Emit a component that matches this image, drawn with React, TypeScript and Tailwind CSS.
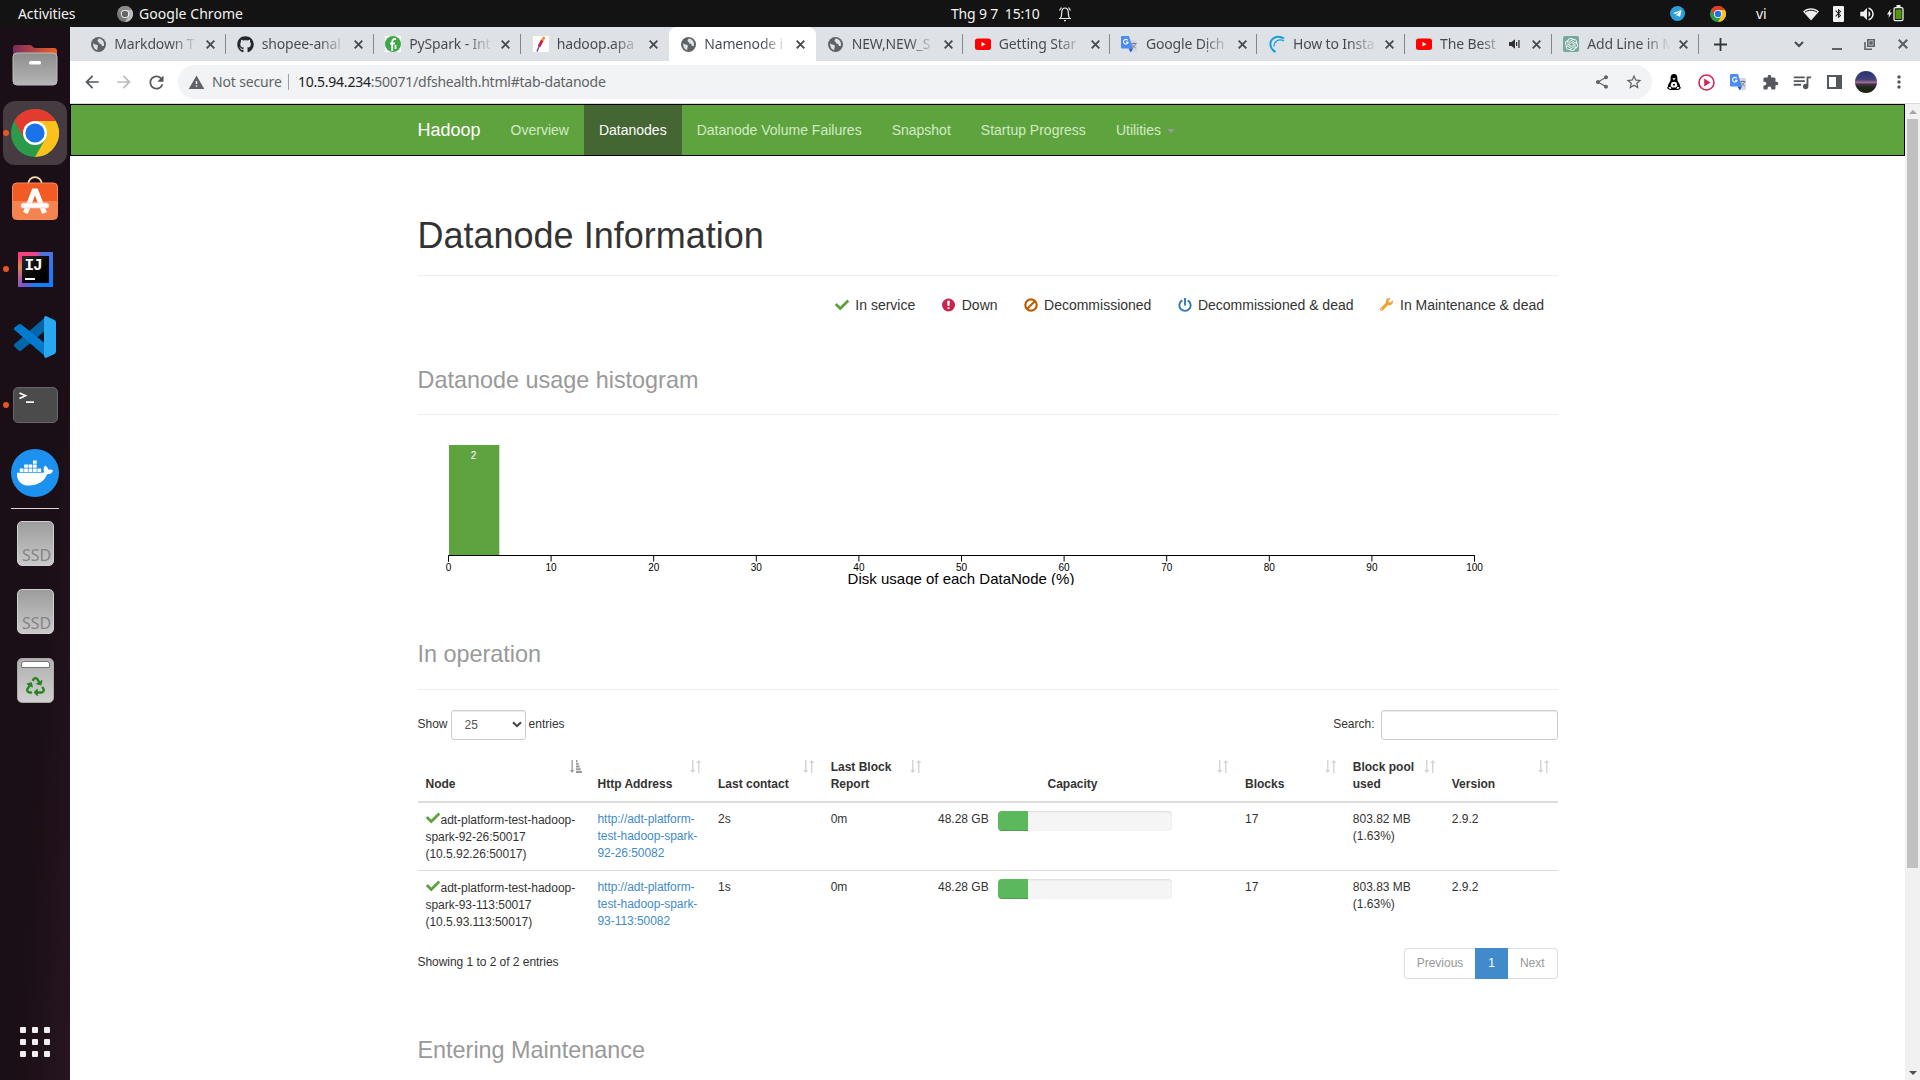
import React from "react";
import {
  FaCheck, FaDocker, FaGithub, FaRecycle, FaWrench, FaTelegramPlane,
} from "react-icons/fa";
import {
  MdArrowBack, MdArrowForward, MdBluetooth, MdExtension, MdOutlineQueueMusic,
  MdRefresh, MdShare, MdStarOutline, MdVolumeUp, MdWarning, MdMoreVert,
} from "react-icons/md";
import { SiOpenai } from "react-icons/si";

function Chrome({ size, mono = false }: { size: number; mono?: boolean }) {
  const c = mono ? ["#8a8a8a", "#777", "#bbb", "#666"] : ["#e33b2e", "#2a9a4b", "#fcc21b", "#1a73e8"];
  return (
    <svg width={size} height={size} viewBox="0 0 48 48">
      <circle cx="24" cy="24" r="24" fill={c[1]} />
      <path d="M24 24 34.4 30 24 48A24 24 0 0 0 44.8 12H24Z" fill={c[2]} />
      <path d="M24 12H44.8A24 24 0 0 0 3.2 12L13.6 30 24 24Z" fill={c[0]} />
      <circle cx="24" cy="24" r="12" fill="#fff" />
      <circle cx="24" cy="24" r="9.6" fill={c[3]} />
    </svg>
  );
}

function Globe() {
  return (
    <svg width="15" height="15" viewBox="0 0 16 16">
      <circle cx="8" cy="8" r="8" fill="#5f6368" />
      <path d="M2.300 6.500C3 8 4.500 8 5.800 8.300 7.300 8.700 7.800 9.600 7 10.800L6.500 14C4 13.500 2 11 2.300 6.500ZM8.500 1.700C7 3 6.500 4 7.500 5 8.700 5.300 8.300 6.500 9 7c1.500 0 2.300.8 2.500 2.300.8.400 1.300.300 2.300 0C14.500 6 12.500 2.300 8.500 1.700Z" fill="#dee1e6" />
    </svg>
  );
}

function Translate() {
  return (
    <svg width="17" height="17" viewBox="0 0 17 17">
      <path d="M7 4h9v12H10Z" fill="#d5d8dc" />
      <path d="M1 0h7l4 12.500H1a1 1 0 0 1-1-1V1a1 1 0 0 1 1-1Z" fill="#4b8bf5" />
      <path d="M7.500 12.500H12L9.800 16.500Z" fill="#2c56c9" />
      <path d="M6.800 4.400A2.300 2.300 0 1 0 7.100 6.200H5" fill="none" stroke="#fff" strokeWidth="1.100" />
      <path d="M10.500 7.500h5M13 6.500v1M14.700 7.500c-.5 2-2 3.500-3.500 4M11.500 8.500c.6 1.500 1.800 2.800 3.300 3.500" fill="none" stroke="#6d7782" strokeWidth=".9" />
    </svg>
  );
}

function PySpark() {
  return (
    <span className="flex size-4 items-center justify-center bg-white">
      <svg width="16" height="16" viewBox="0 0 16 16">
        <circle cx="8" cy="8" r="8" fill="#3fa846" />
        <path d="M11 3.200C8.500 2.500 7.300 3.600 7.200 6V15M5 7.500h5M10.500 9v4" stroke="#fff" strokeWidth="1.800" fill="none" />
      </svg>
    </span>
  );
}

function Feather() {
  return (
    <svg width="16" height="16" viewBox="0 0 16 16">
      <rect width="16" height="16" fill="#fff" />
      <path d="M11.500 1 8.500 5.500" stroke="#f0932b" strokeWidth="2.600" />
      <path d="M9.200 4.500 6 10.500" stroke="#c8204c" strokeWidth="2.800" />
      <path d="M6.500 9.500 4 15.500" stroke="#7b4aa0" strokeWidth="1.500" />
    </svg>
  );
}

function Swirl() {
  return (
    <svg width="16" height="18" viewBox="0 0 16 18" fill="none" stroke="#16a0dc">
      <path d="M15 3.500C8-1 .5 4 1.500 10c.4 3 2 5.500 5 7" strokeWidth="2" />
      <path d="M15 6C9 3 5 7 5 11.500" strokeWidth="1.300" />
    </svg>
  );
}

function OpenAI() {
  return (
    <span className="flex size-4 items-center justify-center rounded-[2px] bg-[#74a99b]">
      <SiOpenai size={13} color="#fff" />
    </span>
  );
}

function YouTube() {
  return (
    <svg width="16" height="16" viewBox="0 0 16 16">
      <rect y="2.500" width="16" height="11.500" rx="2.500" fill="#f00" />
      <path d="M6.500 6v4.500l4-2.250Z" fill="#fff" />
    </svg>
  );
}

function X({ size = 8, w = 1.6, color = "#45494d" }: { size?: number; w?: number; color?: string }) {
  return (
    <svg width={size} height={size} viewBox="0 0 8 8" stroke={color} strokeWidth={w}>
      <path d="M.6.600 7.400 7.400M7.400.600.600 7.400" />
    </svg>
  );
}

type TabInfo = { icon: React.ReactNode; title: string; active?: boolean; sep?: boolean; audio?: boolean };

const tabs: TabInfo[] = [
  { icon: <Globe />, title: "Markdown T", sep: true },
  { icon: <FaGithub size={17} color="#24292e" />, title: "shopee-anal", sep: true },
  { icon: <PySpark />, title: "PySpark - Int", sep: true },
  { icon: <Feather />, title: "hadoop.apa" },
  { icon: <Globe />, title: "Namenode i", active: true },
  { icon: <Globe />, title: "NEW,NEW_S", sep: true },
  { icon: <YouTube />, title: "Getting Star", sep: true },
  { icon: <Translate />, title: "Google Dịch", sep: true },
  { icon: <Swirl />, title: "How to Insta", sep: true },
  { icon: <YouTube />, title: "The Best", sep: true, audio: true },
  { icon: <OpenAI />, title: "Add Line in M", sep: true },
];

function Tab({ t, wide }: { t: TabInfo; wide: boolean }) {
  return (
    <div className={`relative flex h-[34px] shrink-0 items-center pl-[10.500px] ${wide ? "w-[147.500px]" : "w-[147.100px]"} ${t.active ? "rounded-t-lg bg-white" : ""}`}>
      <span className="flex w-[18px] shrink-0 items-center justify-center">{t.icon}</span>
      <span
        className={`ml-[7px] overflow-hidden whitespace-nowrap bg-clip-text text-[14px] leading-[22px] tracking-[-0.150px] text-transparent ${
          t.audio ? "w-[62px]" : "w-[84px]"
        } bg-gradient-to-r from-[#45494d] from-68% to-transparent to-100%`}
      >
        {t.title}
      </span>
      {t.audio && (
        <svg className="ml-[7px]" width="12" height="10" viewBox="0 0 12 10" fill="#333">
          <path d="M0 3h2.500L6 .3v9.400L2.500 7H0ZM7 3h1.200v4H7ZM9.300 1h1.300v8H9.300Z" />
        </svg>
      )}
      <span className={t.audio ? "ml-[11px] flex" : "ml-[8px] flex"}><X size={9} /></span>
      {t.sep && <span className="absolute right-0 top-[7px] h-5 w-px bg-[#84888c]" />}
    </div>
  );
}

function TopBar() {
  return (
    <header className="flex h-[27px] items-center bg-[#131313] text-[14px] text-[#f2f2f2]">
      <span className="w-[99px] pl-[18px] tracking-[-0.100px]">Activities</span>
      <span className="ml-[18px] flex"><Chrome size={16} mono /></span>
      <span className="ml-[6px] w-[812px] tracking-[0.050px]">Google Chrome</span>
      <span className="w-[89px] whitespace-pre tracking-[-0.200px]">Thg 9 7  15:10</span>
      <svg className="ml-[18px]" width="14" height="16" viewBox="0 0 14 16" fill="none" stroke="#eee" strokeWidth="1.200">
        <path d="M1 12.500h12M2.500 12.500C4 10 3.500 8 3.800 5.500 4.200 3 5.500 2 7 2s2.800 1 3.200 3.500c.3 2.500-.2 4.500 1.300 7M1.500 4.500 3.500 1.500M12.500 4.500 10.500 1.500M6 14.700h2" />
      </svg>
      <span className="ml-[598px] flex size-[15px] items-center justify-center rounded-full bg-[#2a9fd8]">
        <FaTelegramPlane size={9} color="#fff" />
      </span>
      <span className="ml-[25px] flex"><Chrome size={16} /></span>
      <span className="ml-[30px] w-[11px]">vi</span>
      <svg className="ml-[36px]" width="16" height="14" viewBox="0 0 16 14">
        <path d="M0 4.500C4.500.2 11.500.2 16 4.500L8 13.500Z" fill="#eee" />
        <path d="M2 5.200C5.500 2.600 10.500 2.600 14 5.200" stroke="#131313" strokeWidth="1" fill="none" />
      </svg>
      <span className="ml-[14px] flex h-4 w-[11px] items-center justify-center rounded-[1px] bg-[#f2f2f2]">
        <MdBluetooth size={15} color="#131313" />
      </span>
      <span className="ml-[14px] flex"><MdVolumeUp size={18} color="#eee" /></span>
      <svg className="ml-[11px]" width="17" height="17" viewBox="0 0 17 17">
        <path d="M3.500 4 0 9.500h2L1.500 13 5 7.500H3Z" fill="#eee" />
        <rect x="7" y="2.700" width="9" height="13" rx="1.500" fill="none" stroke="#eee" strokeWidth="1.300" />
        <path d="M9.500 0h4v2h-4Z" fill="#eee" />
        <rect x="8.500" y="4.500" width="6" height="9.500" fill="#4e9a06" />
      </svg>
    </header>
  );
}

function DockItem({ children, running, active }: { children: React.ReactNode; running?: boolean; active?: boolean }) {
  return (
    <div className="relative flex h-[68px] w-[70px] items-center justify-center">
      <div className={`flex size-16 items-center justify-center rounded-xl ${active ? "bg-[#453b41]" : ""}`}>{children}</div>
      {running && <span className="absolute left-[3px] top-[31px] size-[6px] rounded-full bg-[#e95420]" />}
    </div>
  );
}

function Ssd() {
  return (
    <div className="-mt-px flex h-[45px] w-[37px] items-end justify-center rounded-[5px] border border-[#d0d0d0] bg-gradient-to-b from-[#9d9d9d] to-[#c9c9c9]">
      <span className="pb-px pl-[3px] text-[16px] leading-[18px] text-[#858585]">SSD</span>
    </div>
  );
}

function Dock() {
  return (
    <aside className="flex w-[70px] shrink-0 flex-col bg-gradient-to-br from-[#1a0f16] from-60% to-[#27151f] pt-1">
      <DockItem>
        <svg width="46" height="42" viewBox="0 0 46 42">
          <defs>
            <linearGradient id="ff" x1="0" x2="1"><stop stopColor="#7b2b5e" /><stop offset="1" stopColor="#ef6123" /></linearGradient>
            <linearGradient id="fb" x1="0" x2="0" y1="0" y2="1"><stop stopColor="#8e8e8e" /><stop offset="1" stopColor="#b5b5b5" /></linearGradient>
          </defs>
          <path d="M1 14V4a3 3 0 0 1 3-3h14c2 0 3 3 5 3h19a3 3 0 0 1 3 3v8Z" fill="url(#ff)" />
          <rect x="1" y="9" width="44" height="32" rx="4" fill="url(#fb)" stroke="#bcbcbc" />
          <rect x="17" y="17" width="12" height="3.500" rx="1.500" fill="#fff" />
        </svg>
      </DockItem>
      <DockItem running active><Chrome size={48} /></DockItem>
      <DockItem>
        <svg className="-mt-[7px]" width="46" height="44" viewBox="0 0 46 44">
          <path d="M16 9C16-1.500 30-1.500 30 9" fill="none" stroke="#f3dcae" strokeWidth="1.800" />
          <rect x=".5" y="7" width="45" height="36.500" rx="4" fill="#f25b24" stroke="#ef8a62" />
          <path d="M1 25h44v14a4 4 0 0 1-4 4H5a4 4 0 0 1-4-4Z" fill="#f58350" />
          <path d="M13.500 37 22 15h2l8.500 22" fill="none" stroke="#fff" strokeWidth="5" />
          <rect x="9" y="27" width="28" height="5" rx="2.500" fill="#fff" stroke="#f7c9b4" strokeWidth=".7" />
        </svg>
      </DockItem>
      <DockItem running>
        <div className="flex size-[35px] items-center justify-center bg-[conic-gradient(from_20deg,#5a6fd8,#147dff_25%,#147dff_45%,#7a55c8_55%,#c86a8c_65%,#d98a4a_73%,#ff3f7a_80%,#ee4488_95%,#5a6fd8)]">
          <div className="flex size-[27px] flex-col bg-gradient-to-br from-[#2a2a2a] to-black pl-[3px] pt-[2px]">
            <span className="font-['Liberation_Mono'] text-[16px] font-bold leading-[16px] tracking-[-1px] text-white">IJ</span>
            <span className="mt-[4px] h-[2px] w-[10px] bg-white" />
          </div>
        </div>
      </DockItem>
      <DockItem>
        <svg width="42" height="42" viewBox="0 0 42 42">
          <path d="M0 28.500a2 2 0 0 0 .5 2l4 4q1.300 1 2.800 0L32 14V.5Z" fill="#0065a9" />
          <path d="M0 13.500a2 2 0 0 1 .5-2l4-3q1.300-1 2.800 0L32 28v13Z" fill="#007acc" />
          <path d="M31 42 30 40V2l1-2q1 0 2 .4l7 3.400a3 3 0 0 1 2 2.700v29a3 3 0 0 1-2 2.700l-7 3.400q-1 .4-2 .4Z" fill="#27a8f0" />
        </svg>
      </DockItem>
      <DockItem running>
        <div className="flex h-9 w-[45px] rounded-[5px] border border-[#666] bg-[#4b4b4b]">
          <svg className="ml-[5px] mt-[3px]" width="16" height="13" viewBox="0 0 16 13" fill="none" stroke="#fff" strokeWidth="1.700">
            <path d="M.5 2 6.500 4.800.500 7.500M7 11.200h8" />
          </svg>
        </div>
      </DockItem>
      <DockItem>
        <span className="flex size-12 items-center justify-center rounded-full bg-[#1d91f0]"><FaDocker size={36} color="#fff" /></span>
      </DockItem>
      <div className="mx-[11px] my-px h-px bg-[#d8d5d6]" />
      <DockItem><Ssd /></DockItem>
      <DockItem><Ssd /></DockItem>
      <DockItem>
        <div className="flex h-[45px] w-[37px] flex-col items-center rounded-[5px] border border-[#aaa] bg-gradient-to-b from-[#b0b0b0] to-[#d0d0d0]">
          <span className="mt-[2px] h-[7px] w-[29px] rounded-t-[3px] border border-[#777] bg-white" />
          <FaRecycle className="mt-[9px]" size={19} color="#26861f" />
        </div>
      </DockItem>
      <div className="mb-[23px] ml-5 mt-auto grid w-[30px] grid-cols-3 gap-[6px]">
        {Array.from({ length: 9 }, (_, i) => <span key={i} className="size-[6px] rounded-[1px] bg-[#f0eeee]" />)}
      </div>
    </aside>
  );
}

function TabStrip() {
  return (
    <div className="flex h-[34px] items-center bg-[#dee1e6] pl-[8.700px] text-[#45494d]">
      {tabs.map((t, i) => <Tab key={t.title} t={t} wide={i < 5} />)}
      <svg className="ml-[15px]" width="13" height="13" viewBox="0 0 13 13" stroke="#33373a" strokeWidth="1.800"><path d="M6.500 0v13M0 6.500h13" /></svg>
      <svg className="ml-[67px]" width="10" height="7" viewBox="0 0 10 7" fill="none" stroke="#45494d" strokeWidth="2"><path d="m1 1 4 4 4-4" /></svg>
      <span className="ml-[28px] mt-[9px] h-[2px] w-[10px] bg-[#5c6166]" />
      <svg className="ml-[22px]" width="11" height="11" viewBox="0 0 11 11" fill="none" stroke="#5c6166" strokeWidth="1.600">
        <path d="M3.800.800h6.400v6.400H3.800ZM1 3v7.200h7M6 3h2v2H6Z" />
      </svg>
      <span className="ml-[23px] flex"><X size={10} w={1.7} color="#5c6166" /></span>
    </div>
  );
}

function Toolbar() {
  return (
    <div className="flex h-[43px] items-center border-b border-[#d8dadd] bg-white">
      <MdArrowBack className="ml-[12px]" size={20} color="#54585c" />
      <MdArrowForward className="ml-[12px]" size={20} color="#b9bbbe" />
      <MdRefresh className="ml-[12px]" size={21} color="#54585c" />
      <div className="ml-[11px] flex h-[34px] w-[1474px] items-center rounded-full bg-[#f1f3f4] pl-[10px] text-[14px] text-[#5f6368]">
        <MdWarning size={17} />
        <span className="ml-[7px] w-[76px] whitespace-nowrap pb-[2px] tracking-[-0.150px]">Not secure</span>
        <span className="h-4 w-px bg-[#9aa0a6]" />
        <span className="ml-[9px] whitespace-nowrap pb-[2px] tracking-[-0.240px]"><span className="text-[#202124]">10.5.94.234</span>:50071/dfshealth.html#tab-datanode</span>
        <MdShare className="ml-auto" size={16} />
        <MdStarOutline className="ml-[15px] mr-[9px]" size={18} />
      </div>
      <svg className="ml-[15px]" width="14" height="16" viewBox="0 0 14 16">
        <path d="M7 0C4.600 0 3.600 1.600 3.600 4c0 1.500.2 2.500-.8 4C1.500 9.800 1 11 1 12.500L0 14l2.500 2h9L14 14l-1-1.500c0-1.500-.5-2.700-1.800-4.500-1-1.500-.8-2.500-.8-4C10.400 1.600 9.400 0 7 0Z" fill="#000" />
        <path d="M5.300 4.200h3.400L7 6.200ZM4.500 8.500q2.500-1.300 5 0l1 3.500-1.800 1.500H5.300L3.500 12Z" fill="#fff" />
        <path d="M1.500 13h2.300l.7 1.600-1.700.6ZM12.500 13h-2.300l-.7 1.600 1.700.6Z" fill="#fff" />
        <path d="M6 10h2v1.500H6Z" fill="#000" />
      </svg>
      <svg className="ml-[17px]" width="17" height="17" viewBox="0 0 17 17">
        <circle cx="8.500" cy="8.500" r="7.500" fill="none" stroke="#d5264f" strokeWidth="1.600" /><path d="M6.200 4.500v8l6.300-4Z" fill="#d5264f" />
      </svg>
      <span className="ml-[15px] flex"><Translate /></span>
      <MdExtension className="ml-[15px]" size={17} color="#54585c" />
      <MdOutlineQueueMusic className="ml-[12px]" size={22} color="#54585c" />
      <svg className="ml-[14px]" width="15" height="14" viewBox="0 0 15 14"><path d="M1 1h13v12H1Z" fill="none" stroke="#54585c" strokeWidth="2" /><path d="M9 1h5v12H9Z" fill="#54585c" /></svg>
      <span className="ml-[13px] size-[22px] rounded-full bg-[linear-gradient(#28336b_0%,#45427e_40%,#a0708c_52%,#47304a_60%,#1d2a16_75%,#17210f_100%)]" />
      <MdMoreVert className="ml-[12px]" size={20} color="#54585c" />
    </div>
  );
}

function PageHeader({ title, small, className }: { title: string; small?: boolean; className: string }) {
  return (
    <div className={`border-b border-[#eee] ${small ? "pb-[18px] pt-px" : "pb-[19px]"} ${className}`}>
      <h1 className="h-[39.600px] text-[36px] leading-[39.600px] text-[#333]">
        {small ? <small className="text-[23.400px] leading-none text-[#999]">{title}</small> : title}
      </h1>
    </div>
  );
}

function Legend() {
  const items: [React.ReactNode, string][] = [
    [<FaCheck size={14} color="#5fa341" />, "In service"],
    [<svg width="13" height="14" viewBox="0 0 14 14"><circle cx="7" cy="7" r="7" fill="#c7254e" /><path d="M5.600 2.500h2.800L8 8H6ZM6 9.300h2v2H6Z" fill="#fff" /></svg>, "Down"],
    [<svg width="14" height="14" viewBox="0 0 14 14" fill="none" stroke="#bc5f04" strokeWidth="2.200"><circle cx="7" cy="7" r="5.700" /><path d="m3 11 8-8" /></svg>, "Decommissioned"],
    [<svg width="14" height="14" viewBox="0 0 14 14" fill="none" stroke="#3477b5" strokeWidth="1.900"><path d="M4.300 2.400a5.600 5.600 0 1 0 5.400 0M7 0v7.500" /></svg>, "Decommissioned & dead"],
    [<FaWrench className="-scale-x-100 rotate-90" size={13} color="#eea236" />, "In Maintenance & dead"],
  ];
  return (
    <ul className="mt-[19px] flex h-5 justify-end gap-[26.200px] pr-[13.500px] text-[14px] leading-5">
      {items.map(([icon, label]) => (
        <li key={label} className="flex items-center gap-[6.300px]"><span className="flex w-[14px] justify-center">{icon}</span>{label}</li>
      ))}
    </ul>
  );
}

function Histogram() {
  const ticks = Array.from({ length: 11 }, (_, i) => i * 10);
  return (
    <svg className="mt-5 block overflow-hidden font-['Liberation_Sans']" width="1140" height="150">
      <rect x="31" y="10" width="50.300" height="110" fill="#5fa341" />
      <text x="55.500" y="24" fill="#fff" fontSize="10" textAnchor="middle">2</text>
      <path d="M30.500 126.500V120.500H1056.500V126.500" fill="none" stroke="#000" />
      {ticks.map((t) => (
        <g key={t}>
          <path d={`M${30.5 + t * 10.26} 120.500v6`} stroke="#000" />
          <text x={30.5 + t * 10.26} y="136" fontSize="10" textAnchor="middle">{t}</text>
        </g>
      ))}
      <text x="543" y="148.500" fontSize="15" textAnchor="middle">Disk usage of each DataNode (%)</text>
    </svg>
  );
}

function SortIcon({ active }: { active?: boolean }) {
  return (
    <svg className="absolute right-2 top-[9px]" width="12" height="13" viewBox="0 0 12 13" fill={active ? "#999" : "#d6d6d6"}>
      {active ? (
        <path d="M1.500 0h1.300v10h1.500L2.100 13 0 10h1.500ZM6 0h1.500v2H6ZM6 2.800h2.700v2H6ZM6 5.500h3.700v2H6ZM6 8.200h4.700v2H6ZM6 10.900h6v2H6Z" />
      ) : (
        <path d="M2 0h1.500v10H5.500L2.750 13 0 10h2ZM8 13h1.500V3h2L8.750 0 6 3h2Z" />
      )}
    </svg>
  );
}

const columns: { label: string; width: string }[] = [
  { label: "Node", width: "w-[172px]" },
  { label: "Http Address", width: "w-[120.500px]" },
  { label: "Last contact", width: "w-[112.700px]" },
  { label: "Last Block\nReport", width: "w-[107.300px]" },
  { label: "Capacity", width: "w-[307px]" },
  { label: "Blocks", width: "w-[107.800px]" },
  { label: "Block pool\nused", width: "w-[99px]" },
  { label: "Version", width: "w-[113.700px]" },
];

const rows = [
  { id: "92-26", ip: "10.5.92.26", contact: "2s", pool: "803.82 MB" },
  { id: "93-113", ip: "10.5.93.113", contact: "1s", pool: "803.83 MB" },
];

function NodeTable() {
  return (
    <table className="mt-[10px] w-[1140px] table-fixed border-collapse text-[12px] leading-[17px]">
      <thead>
        <tr className="h-[51px] border-b-2 border-[#ddd]">
          {columns.map((c, i) => (
            <th key={c.label} className={`relative whitespace-pre p-2 pr-[30px] align-bottom font-bold ${c.width} ${c.label === "Capacity" ? "text-center" : "text-left"}`}>
              {c.label}
              <SortIcon active={i === 0} />
            </th>
          ))}
        </tr>
      </thead>
      <tbody>
        {rows.map((r, i) => (
          <tr key={r.id} className={`h-[69px] align-top *:p-2 ${i ? "border-t border-[#ddd]" : ""}`}>
            <td className="!pb-[6px] !pr-0 !pt-[9px] tracking-[-0.030px]">
              <FaCheck className="-mt-px mr-px inline align-top" size={14} color="#5fa341" />
              adt-platform-test-hadoop-<br />spark-{r.id}:50017<br />({r.ip}:50017)
            </td>
            <td className="tracking-[-0.050px] text-[#428bca]">http://adt-platform-<br />test-hadoop-spark-<br />{r.id}:50082</td>
            <td>{r.contact}</td>
            <td>0m</td>
            <td>
              <div className="flex">
                <span className="w-[60px] whitespace-nowrap">48.28 GB</span>
                <div className="h-5 w-[174px] overflow-hidden rounded bg-[#f5f5f5] shadow-[inset_0_1px_2px_rgba(0,0,0,0.1)]">
                  <div className="h-5 w-[30px] bg-[#5cb85c] shadow-[inset_0_-1px_0_rgba(0,0,0,0.15)]" />
                </div>
              </div>
            </td>
            <td>17</td>
            <td>{r.pool}<br />(1.63%)</td>
            <td>2.9.2</td>
          </tr>
        ))}
      </tbody>
    </table>
  );
}

function Page() {
  const nav = ["Overview", "Datanodes", "Datanode Volume Failures", "Snapshot", "Startup Progress"];
  return (
    <main className="h-[976px] w-[1835px] overflow-hidden bg-white font-['Liberation_Sans',Arial,sans-serif] text-[#333]">
      <nav className="h-[52px] border border-black bg-[#5fa33e]">
        <div className="mx-auto flex w-[1140px] text-[14px] leading-[50px] text-[#d2ebc6]">
          <span className="pr-[15px] text-[18px] text-white">Hadoop</span>
          {nav.map((n) => (
            <span key={n} className={`px-[15px] ${n === "Datanodes" ? "bg-[#446633] text-white" : ""}`}>{n}</span>
          ))}
          <span className="flex items-center px-[15px]">
            Utilities
            <span className="ml-[6px] mt-[2px] border-x-4 border-t-4 border-x-transparent border-t-[#999]" />
          </span>
        </div>
      </nav>
      <div className="mx-auto w-[1140px]">
        <PageHeader title="Datanode Information" className="mt-[60.400px]" />
        <Legend />
        <PageHeader title="Datanode usage histogram" small className="mt-[40.400px]" />
        <Histogram />
        <PageHeader title="In operation" small className="mt-[44.400px] !pb-[19px]" />
        <div className="mt-5 flex h-[31px] justify-between text-[12px]">
          <div className="flex">
            <span className="mt-[6px] leading-[17px]">Show</span>
            <span className="ml-[3px] flex h-[30px] w-[75px] items-center justify-between rounded-[3px] border border-[#ccc] pl-[13px] pr-[3px] text-[#555] shadow-[inset_0_1px_1px_rgba(0,0,0,0.075)]">
              25
              <svg width="10" height="7" viewBox="0 0 10 7" fill="none" stroke="#444" strokeWidth="2"><path d="m1 1.200 4 4 4-4" /></svg>
            </span>
            <span className="ml-[3px] mt-[6px] leading-[17px]">entries</span>
          </div>
          <div className="flex">
            <span className="mt-[6px] leading-[17px]">Search:</span>
            <span className="ml-[6px] h-[30px] w-[177px] rounded-[3px] border border-[#ccc] shadow-[inset_0_1px_1px_rgba(0,0,0,0.075)]" />
          </div>
        </div>
        <NodeTable />
        <div className="mt-[8px] flex h-[32px] items-start justify-between text-[12px]">
          <span className="mt-[6px] leading-[17px] tracking-[-0.040px]">Showing 1 to 2 of 2 entries</span>
          <div className="flex h-[31px] leading-[29px] text-[#999]">
            <span className="w-[71px] rounded-l-[4px] border border-r-0 border-[#ddd] text-center">Previous</span>
            <span className="w-[33px] border border-[#428bca] bg-[#428bca] text-center text-white">1</span>
            <span className="w-[49.500px] rounded-r-[4px] border border-l-0 border-[#ddd] text-center">Next</span>
          </div>
        </div>
        <PageHeader title="Entering Maintenance" small className="mt-[45px]" />
      </div>
    </main>
  );
}

function Scrollbar() {
  return (
    <div className="flex w-[15px] flex-col items-center bg-[#f1f1f1]">
      <span className="mt-[6px] border-x-4 border-b-4 border-x-transparent border-b-[#a3a3a3]" />
      <span className="mt-[5px] h-[749px] w-[11px] bg-[#c1c1c1]" />
      <span className="mb-[5px] mt-auto border-x-4 border-t-4 border-x-transparent border-t-[#505050]" />
    </div>
  );
}

export default function App() {
  return (
    <div className="flex h-[1080px] w-[1920px] flex-col overflow-hidden bg-white font-['Noto_Sans','Open_Sans',sans-serif]">
      <TopBar />
      <div className="flex h-[1053px]">
        <Dock />
        <div className="flex w-[1850px] flex-col">
          <TabStrip />
          <Toolbar />
          <div className="flex h-[976px]">
            <Page />
            <Scrollbar />
          </div>
        </div>
      </div>
    </div>
  );
}
